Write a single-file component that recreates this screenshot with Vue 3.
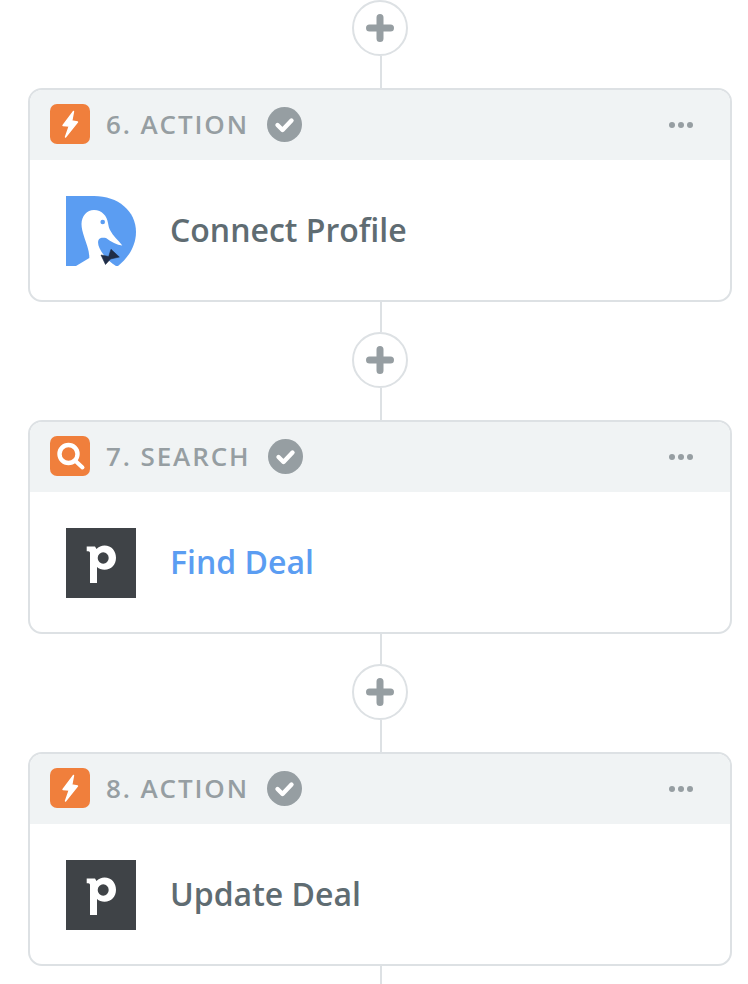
<script setup>
const steps = [
  { id: 6, kind: 'ACTION', app: 'duck', title: 'Connect Profile' },
  { id: 7, kind: 'SEARCH', app: 'pipedrive', title: 'Find Deal', link: true },
  { id: 8, kind: 'ACTION', app: 'pipedrive', title: 'Update Deal' }
]
</script>

<template>
  <div class="flow">
    <div v-for="step in steps" :key="step.id" class="step">
      <div class="connector">
        <button class="add">
          <svg width="28" height="28" viewBox="0 0 28 28">
            <path d="M14 3.500v21M3.500 14h21" stroke="#969ea2" stroke-width="7" stroke-linecap="round" fill="none" />
          </svg>
        </button>
        <div class="line"></div>
      </div>
      <div class="card">
        <div class="card-head">
          <span class="badge">
            <svg v-if="step.kind === 'ACTION'" width="40" height="40" viewBox="0 0 40 40">
              <path d="M23.500 7.500 13 21.500l6.300.5L15.500 33 27.500 18l-5.800-1z" fill="#fff" stroke="#fff" stroke-width="1.400" stroke-linejoin="round" />
            </svg>
            <svg v-else width="40" height="40" viewBox="0 0 40 40">
              <circle cx="18.500" cy="18" r="9" fill="none" stroke="#fff" stroke-width="4.400" />
              <path d="M25.500 25l7 6.500" stroke="#fff" stroke-width="4" stroke-linecap="round" />
            </svg>
          </span>
          <span class="label">{{ step.id }}. {{ step.kind }}</span>
          <svg class="check" width="35" height="35" viewBox="0 0 35 35">
            <circle cx="17.500" cy="17.500" r="17.500" fill="#969ea2" />
            <path d="M10.500 18l5 5 9-9.500" fill="none" stroke="#fff" stroke-width="4.400" stroke-linecap="round" stroke-linejoin="round" />
          </svg>
          <span class="dots"><i></i><i></i><i></i></span>
        </div>
        <div class="card-body">
          <svg v-if="step.app === 'duck'" class="logo" width="70" height="70" viewBox="0 0 70 70">
            <path d="M0 0H28C52 0 70 15 70 36 70 50 62 62 52 70H0z" fill="#5b9df2" />
            <path d="M10 70 23.300 62C23.500 55 20.500 48 18.500 42 16.500 36 15.500 32 15.500 28 15.500 20 21 14 28 14 36 14 41 20 42 27 42.500 30 43 32 44 34 47 40 52 44 56.300 49.500 51 49 45 46 40 42 37 41.500 33.500 41.500 32.500 44 31 48 33.500 53 37 58 40 62 45 67 50 70z" fill="#fff" />
            <circle cx="36.700" cy="26" r="2.300" fill="#5b9df2" />
            <path d="M35 59 42.700 60.500 45 53.300 53.300 61 44.500 63 39.500 68.500z" fill="#1f2d47" stroke="#1f2d47" stroke-width=".6" stroke-linejoin="round" />
          </svg>
          <svg v-else class="logo" width="70" height="70" viewBox="0 0 70 70">
            <rect width="70" height="70" fill="#3f4347" />
            <path d="M20.700 18.500H29l1.500 2.500C32.500 18.800 35.500 17.500 38.500 17.500 45.500 17.500 50 23 50 29.700 50 36.500 45.500 41.700 38.500 41.700 35.500 41.700 33 40.700 31 39V55H24V25c0-1-.6-1.700-1.700-1.700H20.700z" fill="#fff" />
            <ellipse cx="37.200" cy="30" rx="5.500" ry="5.800" fill="#3f4347" />
          </svg>
          <span class="title" :class="{ link: step.link }">{{ step.title }}</span>
        </div>
      </div>
    </div>
    <div class="tail"></div>
  </div>
</template>

<style scoped>
.flow {
  width: 748px;
  height: 984px;
  overflow: hidden;
  box-sizing: border-box;
  padding: 0 16px 0 28px;
  font-family: "Open Sans", sans-serif;
  background: #fff;
}

.step {
  display: flex;
  flex-direction: column;
}

.connector {
  display: flex;
  flex-direction: column;
  align-items: center;
}

.step:not(:first-child) .connector::before,
.tail {
  content: "";
  display: block;
  width: 2px;
  height: 30px;
  margin-left: 2px;
  background: #dde1e4;
}

.tail {
  height: 20px;
  margin-left: 352px;
}

.add {
  box-sizing: border-box;
  width: 56px;
  height: 56px;
  padding: 0;
  display: flex;
  align-items: center;
  justify-content: center;
  background: #fff;
  border: 2px solid #dde1e4;
  border-radius: 50%;
}

.line {
  width: 2px;
  height: 32px;
  margin-left: 2px;
  background: #dde1e4;
}

.card {
  box-sizing: border-box;
  height: 214px;
  border: 2px solid #dde1e4;
  border-radius: 14px;
  overflow: hidden;
}

.card-head {
  height: 70px;
  box-sizing: border-box;
  padding: 0 37px 2px 20px;
  display: flex;
  align-items: center;
  background: #f0f3f4;
}

.badge {
  width: 40px;
  height: 40px;
  border-radius: 7px;
  background: #f07f3c;
  display: block;
}

.badge svg {
  display: block;
}

.label {
  margin-left: 16px;
  padding-bottom: 1px;
  font-size: 26px;
  font-weight: 600;
  letter-spacing: 1.9px;
  color: #969ea2;
}

.check {
  margin-left: 18px;
}

.dots {
  margin-left: auto;
  margin-top: 2px;
  display: flex;
  gap: 3px;
}

.dots i {
  width: 6px;
  height: 6px;
  border-radius: 50%;
  background: #969ea2;
}

.card-body {
  height: 142px;
  box-sizing: border-box;
  padding-left: 36px;
  display: flex;
  align-items: center;
}

.logo {
  display: block;
}

.title {
  margin-left: 34px;
  padding-bottom: 3px;
  font-size: 32px;
  font-weight: 600;
  color: #5f6c72;
}

.title.link {
  color: #5b9df2;
}
</style>
